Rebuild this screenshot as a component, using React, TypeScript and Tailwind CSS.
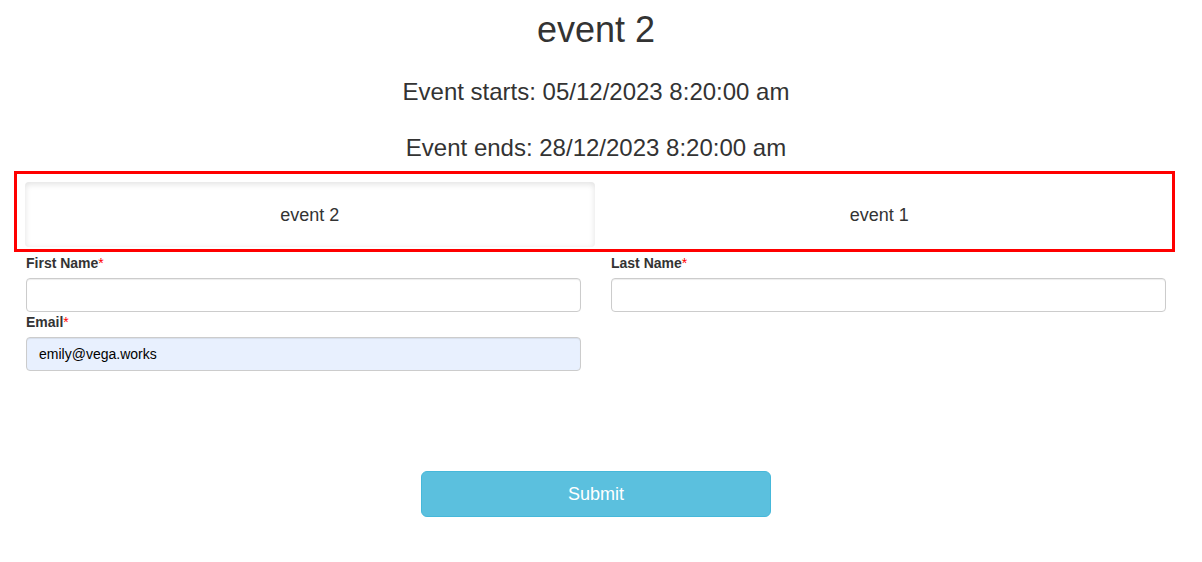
import React from "react";

function Field({
  label,
  value,
  filled,
}: {
  label: string;
  value?: string;
  filled?: boolean;
}) {
  return (
    <div>
      <label className="block text-[14px] leading-[20px] font-bold text-[#333] mb-[5px]">
        {label}
        <span className="text-[#ff0000] font-normal">*</span>
      </label>
      <input
        readOnly
        value={value ?? ""}
        className={
          "block w-full h-[34px] px-[12px] rounded-[4px] border border-[#ccc] text-[14px] text-black outline-none shadow-[inset_0_1px_1px_rgba(0,0,0,0.075)] " +
          (filled ? "bg-[#e8f0fe]" : "bg-white")
        }
      />
    </div>
  );
}

export default function App() {
  return (
    <div
      className="min-h-[562px] bg-white text-[#333]"
      style={{ fontFamily: '"Liberation Sans", Arial, sans-serif' }}
    >
      <div className="ml-[26px] w-[1140px]">
        <h1 className="mt-[10px] text-[36px] leading-[40px] text-center">event 2</h1>
        <h3 className="mt-[28px] text-[24px] leading-[28px] text-center">
          Event starts: 05/12/2023 8:20:00 am
        </h3>
        <h3 className="mt-[28px] text-[24px] leading-[28px] text-center">
          Event ends: 28/12/2023 8:20:00 am
        </h3>

        <div className="mt-[9px] ml-[-12px] w-[1161px] h-[81px] border-[3px] border-[#ff0000] pt-[8px] pl-[8px] pr-[8px]">
          <div className="flex h-[65px]">
            <div className="flex-1 flex items-center justify-center pt-[1px] rounded-[4px] bg-white text-[18px] shadow-[inset_0_2px_6px_rgba(0,0,0,0.12)]">
              event 2
            </div>
            <div className="flex-1 flex items-center justify-center pt-[1px] text-[18px]">
              event 1
            </div>
          </div>
        </div>

        <div className="mt-[1px] grid grid-cols-2 gap-x-[30px]">
          <Field label="First Name" />
          <Field label="Last Name" />
          <Field label="Email" value="emily@vega.works" filled />
        </div>

        <div className="mt-[100px] flex justify-center">
          <button className="w-[350px] h-[46px] rounded-[6px] bg-[#5bc0de] border border-[#46b8da] text-white text-[18px]">
            Submit
          </button>
        </div>
      </div>
    </div>
  );
}
